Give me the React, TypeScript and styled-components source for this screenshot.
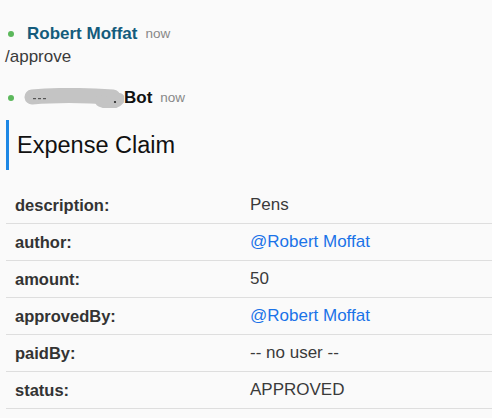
import React from "react";
import styled, { createGlobalStyle } from "styled-components";

const Global = createGlobalStyle`
  html, body {
    margin: 0;
    padding: 0;
    background: #fafafa;
  }
  body {
    font-family: "Liberation Sans", Arial, sans-serif;
    color: #333;
  }
`;

const Page = styled.div`
  padding-top: 24px;
  width: 492px;
  height: 394px;
  overflow: hidden;
`;

const Message = styled.div<{ $gap?: number }>`
  display: flex;
  flex-direction: column;
  margin-bottom: ${(p) => p.$gap ?? 0}px;
`;

const Header = styled.div`
  display: flex;
  align-items: center;
  height: 20px;
  line-height: 20px;
`;

const Dot = styled.span`
  width: 6px;
  height: 6px;
  border-radius: 50%;
  background: #5cb85c;
  margin-left: 8px;
  flex: none;
`;

const Name = styled.span<{ $color: string }>`
  display: flex;
  align-items: center;
  font-weight: bold;
  font-size: 17px;
  color: ${(p) => p.$color};
  margin-left: 13px;
`;

const Time = styled.span`
  font-size: 13.5px;
  color: #888;
  margin-left: 8px;
`;

const Body = styled.div`
  font-size: 17px;
  line-height: 20px;
  color: #3a3a3a;
  margin-top: 3px;
  padding-left: 5px;
`;

const Redaction = styled.svg`
  margin-left: -4px;
  flex: none;
`;

const Card = styled.div`
  margin-top: 12px;
`;

const TitleRow = styled.div`
  display: flex;
  align-items: center;
  height: 50px;
  margin-left: 6px;
  border-left: 3px solid #1e88e5;
  padding-left: 8px;
`;

const Title = styled.span`
  font-size: 23.5px;
  color: #111;
`;

const Table = styled.div`
  margin-top: 17px;
  margin-left: 6px;
  display: flex;
  flex-direction: column;
`;

const Row = styled.div`
  display: grid;
  grid-template-columns: 244px 1fr;
  align-items: center;
  height: 36px;
  border-bottom: 1px solid #dedede;
  line-height: 20px;
`;

const Label = styled.span`
  font-weight: bold;
  font-size: 16.5px;
  color: #333;
  padding-left: 9px;
`;

const Value = styled.span<{ $link?: boolean }>`
  font-size: 17px;
  color: ${(p) => (p.$link ? "#1a73e8" : "#3a3a3a")};
`;

const rows: { label: string; value: string; link?: boolean }[] = [
  { label: "description:", value: "Pens" },
  { label: "author:", value: "@Robert Moffat", link: true },
  { label: "amount:", value: "50" },
  { label: "approvedBy:", value: "@Robert Moffat", link: true },
  { label: "paidBy:", value: "-- no user --" },
  { label: "status:", value: "APPROVED" },
];

export default function App() {
  return (
    <>
      <Global />
      <Page>
        <Message $gap={21}>
          <Header>
            <Dot />
            <Name $color="#145c7c">Robert Moffat</Name>
            <Time>now</Time>
          </Header>
          <Body>/approve</Body>
        </Message>
        <Message>
          <Header>
            <Dot />
            <Name $color="#111">
              <Redaction width="101" height="20" viewBox="0 0 101 20">
                <path
                  d="M9 9 C 30 7, 60 7, 90 9"
                  stroke="#c4c4c4"
                  strokeWidth="15"
                  strokeLinecap="round"
                  fill="none"
                />
                <path
                  d="M78 13 C 85 16, 92 16, 96 11"
                  stroke="#c4c4c4"
                  strokeWidth="12"
                  strokeLinecap="round"
                  fill="none"
                />
                <rect x="10" y="10" width="3" height="1.2" fill="#555" />
                <rect x="15" y="10" width="3" height="1.2" fill="#555" />
                <rect x="20" y="10" width="3" height="1.2" fill="#555" />
                <circle cx="92" cy="14" r="1.1" fill="#222" />
              </Redaction>
              Bot
            </Name>
            <Time>now</Time>
          </Header>
        </Message>
        <Card>
          <TitleRow>
            <Title>Expense Claim</Title>
          </TitleRow>
          <Table>
            {rows.map((r) => (
              <Row key={r.label}>
                <Label>{r.label}</Label>
                <Value $link={r.link}>{r.value}</Value>
              </Row>
            ))}
          </Table>
        </Card>
      </Page>
    </>
  );
}
